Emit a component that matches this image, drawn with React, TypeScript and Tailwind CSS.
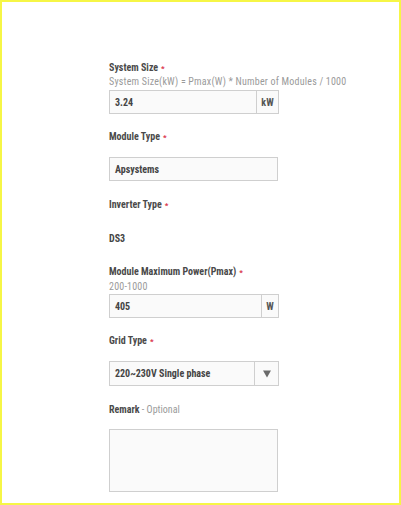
import { ReactNode } from "react";

function Label({ children, optional }: { children: ReactNode; optional?: boolean }) {
  return (
    <div className="text-[10px] leading-[12px] font-bold text-[#4a4a4a] whitespace-nowrap">
      {children}
      {optional ? (
        <span className="font-normal text-[#9a9a9a]"> - Optional</span>
      ) : (
        <span className="text-[#d9334a] ml-[3px] text-[8px]">*</span>
      )}
    </div>
  );
}

function Help({ children, className = "" }: { children: ReactNode; className?: string }) {
  return (
    <div className={`text-[10px] leading-[12px] text-[#9a9a9a] whitespace-nowrap tracking-[0.02em] ${className}`}>
      {children}
    </div>
  );
}

export default function App() {
  return (
    <div className="h-[505px] w-full border-2 border-[#f6f646] bg-white font-['Roboto',sans-serif] font-stretch-[87.5%]">
      <div className="pl-[107px] pt-[60px] w-[279px]">
        {/* System size */}
        <Label>System Size</Label>
        <Help className="mt-px">System Size(kW) = Pmax(W) * Number of Modules / 1000</Help>
        <div className="mt-[2px] flex h-[24px] w-[170px] border border-[#cfcfcf] bg-[#fafafa]">
          <div className="flex-1 flex items-center px-[5px] text-[10px] font-bold text-[#444]">3.24</div>
          <div className="w-[22px] border-l border-[#cfcfcf] flex items-center justify-center text-[10px] font-bold text-[#555]">
            kW
          </div>
        </div>

        {/* Module type */}
        <div className="mt-[17px]">
          <Label>Module Type</Label>
        </div>
        <div className="mt-[13px] flex items-center h-[24px] w-[169px] border border-[#cfcfcf] bg-[#fafafa] px-[5px] text-[10px] font-bold text-[#444]">
          Apsystems
        </div>

        {/* Inverter type */}
        <div className="mt-[18px]">
          <Label>Inverter Type</Label>
        </div>
        <div className="mt-[21px] text-[10px] leading-[12px] font-bold text-[#444]">DS3</div>

        {/* Pmax */}
        <div className="mt-[21px]">
          <Label>Module Maximum Power(Pmax)</Label>
        </div>
        <Help className="mt-[2px]">200-1000</Help>
        <div className="mt-px flex h-[24px] w-[170px] border border-[#cfcfcf] bg-[#fafafa]">
          <div className="flex-1 flex items-center px-[5px] text-[10px] font-bold text-[#444]">405</div>
          <div className="w-[17px] border-l border-[#cfcfcf] flex items-center justify-center text-[10px] font-bold text-[#555]">
            W
          </div>
        </div>

        {/* Grid type */}
        <div className="mt-[17px]">
          <Label>Grid Type</Label>
        </div>
        <div className="mt-[13px] flex h-[25px] w-[170px] border border-[#cfcfcf] bg-[#fafafa]">
          <div className="flex-1 flex items-center px-[5px] text-[10px] font-bold text-[#444]">
            220~230V Single phase
          </div>
          <div className="w-[24px] border-l border-[#cfcfcf] flex items-center justify-center">
            <svg width="8" height="8" viewBox="0 0 8 8">
              <path d="M0 0.5H8L4 7.5Z" fill="#6a6a6a" />
            </svg>
          </div>
        </div>

        {/* Remark */}
        <div className="mt-[18px]">
          <Label optional>Remark</Label>
        </div>
        <div className="mt-[13px] h-[63px] w-[169px] border border-[#cfcfcf] bg-[#fafafa]" />
      </div>
    </div>
  );
}
